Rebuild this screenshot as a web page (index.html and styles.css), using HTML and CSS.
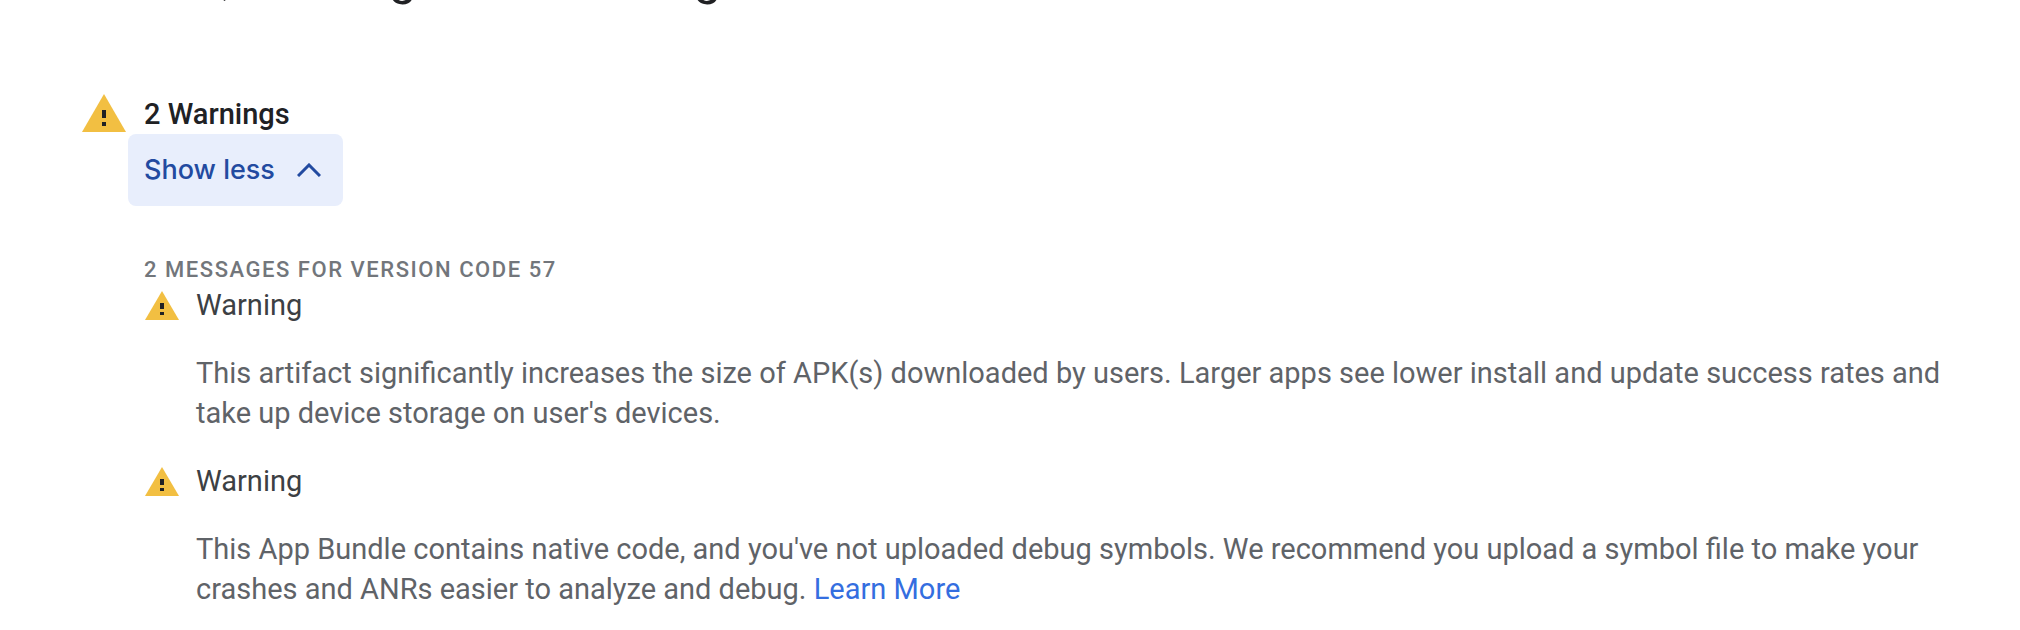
FILE: index.html
```html
<!DOCTYPE html>
<html lang="en">
<head>
<meta charset="utf-8">
<meta name="viewport" content="width=device-width, initial-scale=1">
<title>Errors, warnings and messages</title>
<link rel="stylesheet" href="styles.css">
</head>
<body>
<header class="page-header">
  <h1 class="page-title">Errors, warnings and messages</h1>
</header>
<main class="summary">
  <svg class="summary-icon" viewBox="0 0 44 38" aria-hidden="true">
    <path d="M22 0L44 38H0Z" fill="#f2bf42"/>
    <path d="M20 16h4v8h-4zM20 28h4v4h-4z" fill="#202124"/>
  </svg>
  <div class="summary-body">
    <h2 class="summary-title">2 Warnings</h2>
    <button class="toggle" type="button" aria-expanded="true" aria-controls="messages">
      Show less
      <svg class="chevron" viewBox="0 0 24 14" aria-hidden="true">
        <path d="M1 13L12 2L23 13" fill="none" stroke="#224aa0" stroke-width="3"/>
      </svg>
    </button>
    <section class="messages" id="messages">
      <h3 class="messages-title">2 messages for version code 57</h3>
      <ul class="message-list">
        <li class="message">
          <svg class="message-icon" viewBox="0 0 34 29" aria-hidden="true">
            <path d="M17 0L34 29H0Z" fill="#f2bf42"/>
            <path d="M15 12h4v6h-4zM15 21h4v3h-4z" fill="#202124"/>
          </svg>
          <div class="message-body">
            <h4 class="message-title">Warning</h4>
            <p class="message-text">This artifact significantly increases the size of APK(s) downloaded by users. Larger apps see lower install and update success rates and take up device storage on user's devices.</p>
          </div>
        </li>
        <li class="message">
          <svg class="message-icon" viewBox="0 0 34 29" aria-hidden="true">
            <path d="M17 0L34 29H0Z" fill="#f2bf42"/>
            <path d="M15 12h4v6h-4zM15 21h4v3h-4z" fill="#202124"/>
          </svg>
          <div class="message-body">
            <h4 class="message-title">Warning</h4>
            <p class="message-text">This App Bundle contains native code, and you've not uploaded debug symbols. We recommend you upload a symbol file to make your crashes and ANRs easier to analyze and debug. <a class="link" href="#">Learn More</a></p>
          </div>
        </li>
      </ul>
    </section>
  </div>
</main>
</body>
</html>
```
FILE: styles.css
```css
body {
  margin: 0;
  background: #fff;
  color: #202124;
  font-family: Roboto, "Liberation Sans", sans-serif;
  font-size: 29px;
  line-height: 40px;
}

h1, h2, h3, h4, p, ul {
  margin: 0;
  padding: 0;
  font-size: inherit;
}

/* Title bar scrolled almost out of view */
.page-header {
  display: flex;
  align-items: flex-end;
  height: 6px;
  padding: 0 91px;
  overflow: hidden;
}

.page-title {
  font-size: 49px;
  font-weight: 400;
  line-height: 56px;
}

.summary {
  display: flex;
  align-items: flex-start;
  gap: 18px;
  padding: 88px 60px 24px 82px;
}

.summary-icon {
  flex: none;
  width: 44px;
  height: 38px;
}

.summary-body {
  flex: 1;
  min-width: 0;
}

.summary-title {
  font-weight: 500;
}

.toggle {
  display: flex;
  align-items: center;
  gap: 22px;
  height: 72px;
  margin-left: -16px;
  padding: 0 22px 0 16px;
  border: 0;
  border-radius: 8px;
  background: #e8eefc;
  color: #224aa0;
  font-family: Inter, Roboto, sans-serif;
  font-size: 27px;
  font-weight: 500;
  line-height: 40px;
}

.chevron {
  width: 24px;
  height: 14px;
}

.messages {
  padding-top: 48px;
}

.messages-title {
  color: #72767b;
  font-size: 22px;
  font-weight: 500;
  line-height: 31px;
  letter-spacing: 0.07em;
  text-transform: uppercase;
}

.message-list {
  display: grid;
  gap: 28px;
  list-style: none;
}

.message {
  display: flex;
  align-items: flex-start;
  gap: 17px;
}

.message-icon {
  flex: none;
  width: 34px;
  height: 29px;
  margin: 6px 0 0 1px;
}

.message-body {
  display: grid;
  gap: 28px;
}

.message-title {
  color: #3c4043;
  font-weight: 400;
}

.message-text {
  color: #5f6368;
}

.link {
  color: #346ee0;
  text-decoration: none;
}
```
